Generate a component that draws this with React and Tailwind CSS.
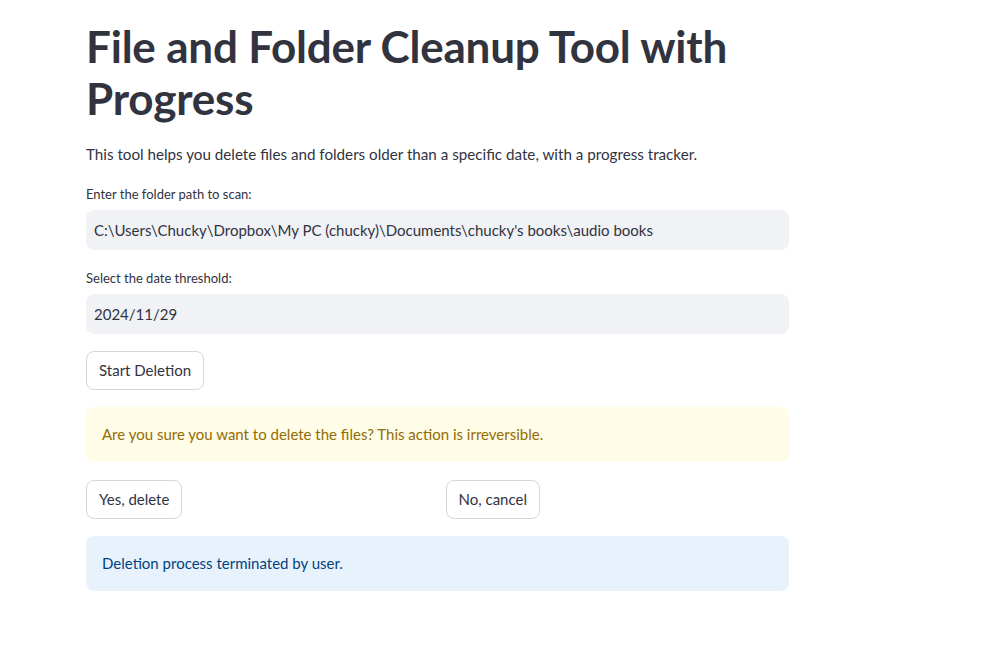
export default function App() {
  const font = { fontFamily: 'Lato, "Noto Sans", sans-serif' };
  return (
    <div className="min-h-[664px] w-full bg-white text-[#31333f]" style={font}>
      <div className="ml-[86px] w-[703px] flex flex-col pt-[20px]">
        <h1 className="text-[44px] font-bold leading-[52px] tracking-[-0.2px] text-[#31333f]">
          File and Folder Cleanup Tool with Progress
        </h1>
        <p className="mt-[18px] text-[15.2px] leading-[24px]">
          This tool helps you delete files and folders older than a specific date, with a progress tracker.
        </p>
        <label className="mt-[18px] text-[13px] leading-[20px]">Enter the folder path to scan:</label>
        <div className="mt-[6px] h-[40px] rounded-lg bg-[#f0f2f6] px-[8px] flex items-center text-[15px]">
          C:\Users\Chucky\Dropbox\My PC (chucky)\Documents\chucky's books\audio books
        </div>
        <label className="mt-[18px] text-[13px] leading-[20px]">Select the date threshold:</label>
        <div className="mt-[6px] h-[40px] rounded-lg bg-[#f0f2f6] px-[8px] flex items-center text-[15px]">
          2024/11/29
        </div>
        <div className="mt-[17px]">
          <button className="h-[39px] px-[12px] rounded-lg border border-[#d6d6d9] bg-white text-[15px]">
            Start Deletion
          </button>
        </div>
        <div className="mt-[17px] h-[55px] rounded-lg bg-[#fffce7] px-[16px] flex items-center text-[15px] text-[#926c05]">
          Are you sure you want to delete the files? This action is irreversible.
        </div>
        <div className="mt-[18px] grid grid-cols-2 gap-[16px]">
          <div>
            <button className="h-[39px] px-[12px] rounded-lg border border-[#d6d6d9] bg-white text-[15px]">
              Yes, delete
            </button>
          </div>
          <div>
            <button className="h-[39px] px-[12px] rounded-lg border border-[#d6d6d9] bg-white text-[15px]">
              No, cancel
            </button>
          </div>
        </div>
        <div className="mt-[17px] h-[55px] rounded-lg bg-[#e8f2fc] px-[16px] flex items-center text-[15px] text-[#004280]">
          Deletion process terminated by user.
        </div>
      </div>
    </div>
  );
}
